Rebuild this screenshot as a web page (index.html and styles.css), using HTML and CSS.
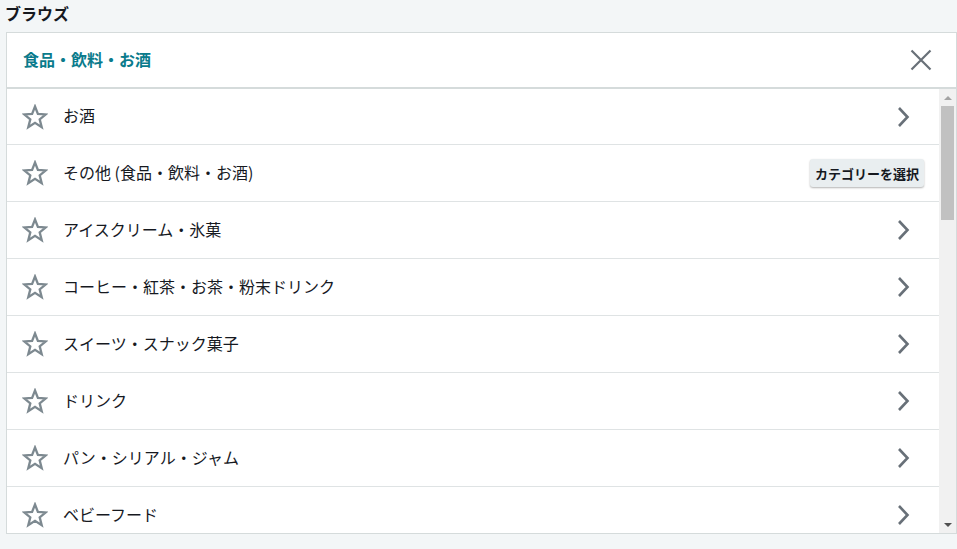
FILE: index.html
```html
<!DOCTYPE html>
<html lang="ja">
<head>
    <meta charset="UTF-8">
    <title>ブラウズ</title>
    <link rel="stylesheet" href="styles.css">
</head>
<body>

    <h2 class="page-title">ブラウズ</h2>

    <div class="panel">
        <div class="panel-head">
            <span class="panel-title">食品・飲料・お酒</span>
            <button class="close-btn" aria-label="閉じる">
                <svg width="22" height="22" viewBox="0 0 22 22"><path d="M1.5 1.5 L20.5 20.5 M20.5 1.5 L1.5 20.5" stroke="#687078" stroke-width="2.2" fill="none"/></svg>
            </button>
        </div>

        <div class="panel-body">
            <ul class="cat-list">
                <li class="cat-row">
                    <svg class="star" viewBox="0 0 26 26"><path d="M13 2.5 L15.9 9.9 L23.8 10.4 L17.7 15.4 L19.7 23.1 L13 18.8 L6.3 23.1 L8.3 15.4 L2.2 10.4 L10.1 9.9 Z" /></svg>
                    <span class="cat-name">お酒</span>
                    <svg class="chev" viewBox="0 0 40 26"><path d="M15 4 L23.5 13 L15 22" /></svg>
                </li>
                <li class="cat-row">
                    <svg class="star" viewBox="0 0 26 26"><path d="M13 2.5 L15.9 9.9 L23.8 10.4 L17.7 15.4 L19.7 23.1 L13 18.8 L6.3 23.1 L8.3 15.4 L2.2 10.4 L10.1 9.9 Z" /></svg>
                    <span class="cat-name">その他 (食品・飲料・お酒)</span>
                    <button class="select-btn">カテゴリーを選択</button>
                </li>
                <li class="cat-row">
                    <svg class="star" viewBox="0 0 26 26"><path d="M13 2.5 L15.9 9.9 L23.8 10.4 L17.7 15.4 L19.7 23.1 L13 18.8 L6.3 23.1 L8.3 15.4 L2.2 10.4 L10.1 9.9 Z" /></svg>
                    <span class="cat-name">アイスクリーム・氷菓</span>
                    <svg class="chev" viewBox="0 0 40 26"><path d="M15 4 L23.5 13 L15 22" /></svg>
                </li>
                <li class="cat-row">
                    <svg class="star" viewBox="0 0 26 26"><path d="M13 2.5 L15.9 9.9 L23.8 10.4 L17.7 15.4 L19.7 23.1 L13 18.8 L6.3 23.1 L8.3 15.4 L2.2 10.4 L10.1 9.9 Z" /></svg>
                    <span class="cat-name">コーヒー・紅茶・お茶・粉末ドリンク</span>
                    <svg class="chev" viewBox="0 0 40 26"><path d="M15 4 L23.5 13 L15 22" /></svg>
                </li>
                <li class="cat-row">
                    <svg class="star" viewBox="0 0 26 26"><path d="M13 2.5 L15.9 9.9 L23.8 10.4 L17.7 15.4 L19.7 23.1 L13 18.8 L6.3 23.1 L8.3 15.4 L2.2 10.4 L10.1 9.9 Z" /></svg>
                    <span class="cat-name">スイーツ・スナック菓子</span>
                    <svg class="chev" viewBox="0 0 40 26"><path d="M15 4 L23.5 13 L15 22" /></svg>
                </li>
                <li class="cat-row">
                    <svg class="star" viewBox="0 0 26 26"><path d="M13 2.5 L15.9 9.9 L23.8 10.4 L17.7 15.4 L19.7 23.1 L13 18.8 L6.3 23.1 L8.3 15.4 L2.2 10.4 L10.1 9.9 Z" /></svg>
                    <span class="cat-name">ドリンク</span>
                    <svg class="chev" viewBox="0 0 40 26"><path d="M15 4 L23.5 13 L15 22" /></svg>
                </li>
                <li class="cat-row">
                    <svg class="star" viewBox="0 0 26 26"><path d="M13 2.5 L15.9 9.9 L23.8 10.4 L17.7 15.4 L19.7 23.1 L13 18.8 L6.3 23.1 L8.3 15.4 L2.2 10.4 L10.1 9.9 Z" /></svg>
                    <span class="cat-name">パン・シリアル・ジャム</span>
                    <svg class="chev" viewBox="0 0 40 26"><path d="M15 4 L23.5 13 L15 22" /></svg>
                </li>
                <li class="cat-row">
                    <svg class="star" viewBox="0 0 26 26"><path d="M13 2.5 L15.9 9.9 L23.8 10.4 L17.7 15.4 L19.7 23.1 L13 18.8 L6.3 23.1 L8.3 15.4 L2.2 10.4 L10.1 9.9 Z" /></svg>
                    <span class="cat-name">ベビーフード</span>
                    <svg class="chev" viewBox="0 0 40 26"><path d="M15 4 L23.5 13 L15 22" /></svg>
                </li>
            </ul>

            <!-- fake scrollbar, same look as the classic one -->
            <div class="scrollbar">
                <span class="sb-arrow sb-up"></span>
                <div class="sb-track">
                    <div class="sb-thumb"></div>
                </div>
                <span class="sb-arrow sb-down"></span>
            </div>
        </div>
    </div>

</body>
</html>
```

FILE: styles.css
```css
body {
    margin: 0;
    padding: 0 0 0 6px;
    background-color: #f3f6f7;
    font-family: "Noto Sans CJK JP", "Noto Sans", sans-serif;
    color: #16191f;
}
.page-title {
    margin: 0 0 8px -1px;
    padding-top: 1px;
    height: 23px;
    line-height: 24px;
    font-size: 16px;
    font-weight: bold;
    color: #16191f;
}
.panel {
    height: 502px;
    box-sizing: border-box;
    border: 1px solid #d5dbdb;
    background-color: #fff;
    display: flex;
    flex-direction: column;
}
.panel-head {
    height: 54px;
    flex: none;
    display: flex;
    align-items: center;
    justify-content: space-between;
    padding: 0 24px 0 16px;
    border-bottom: 2px solid #d5dbdb;
}
.panel-title {
    font-size: 16px;
    font-weight: bold;
    color: #0a7b8c;
    margin-bottom: 3px;
}
.close-btn {
    background: none;
    border: none;
    padding: 0;
    width: 22px;
    height: 22px;
    cursor: pointer;
}
.panel-body {
    flex: 1;
    min-height: 0;
    display: flex;
}
.cat-list {
    flex: 1;
    list-style-type: none;
    margin: 0;
    padding: 0;
    overflow: hidden;
}
.cat-row {
    height: 56px;
    border-bottom: 1px solid #dfe3e4;
    display: flex;
    align-items: center;
    padding: 0 15px 0 15px;
    gap: 15px;
}
.cat-row:first-child {
    height: 55px;
}
.star {
    width: 26px;
    height: 26px;
    flex: none;
}
.star path {
    fill: none;
    stroke: #7d8990;
    stroke-width: 2.3;
    stroke-linejoin: miter;
}
.cat-name {
    flex: 1;
    font-size: 16px;
    margin-bottom: 3px;
}
.chev {
    width: 40px;
    height: 26px;
    flex: none;
}
.chev path {
    fill: none;
    stroke: #687078;
    stroke-width: 2.6;
}
.select-btn {
    font-family: inherit;
    font-size: 13px;
    font-weight: bold;
    color: #16191f;
    background-color: #e9eef0;
    border: none;
    border-radius: 3px;
    height: 28px;
    padding: 0 5px;
    box-shadow: 0 1px 2px rgba(0, 0, 0, 0.3);
    cursor: pointer;
}
.scrollbar {
    width: 17px;
    flex: none;
    background-color: #f1f1f1;
    display: flex;
    flex-direction: column;
    align-items: center;
}
.sb-arrow {
    height: 17px;
    width: 17px;
    flex: none;
    display: flex;
    align-items: center;
    justify-content: center;
}
.sb-up::before {
    content: "";
    border-left: 4px solid transparent;
    border-right: 4px solid transparent;
    border-bottom: 4px solid #a3a3a3;
}
.sb-down::before {
    content: "";
    border-left: 4px solid transparent;
    border-right: 4px solid transparent;
    border-top: 4px solid #505050;
}
.sb-track {
    flex: 1;
    width: 100%;
}
.sb-thumb {
    margin: 0 2px;
    height: 114px;
    background-color: #c1c1c1;
}
```
